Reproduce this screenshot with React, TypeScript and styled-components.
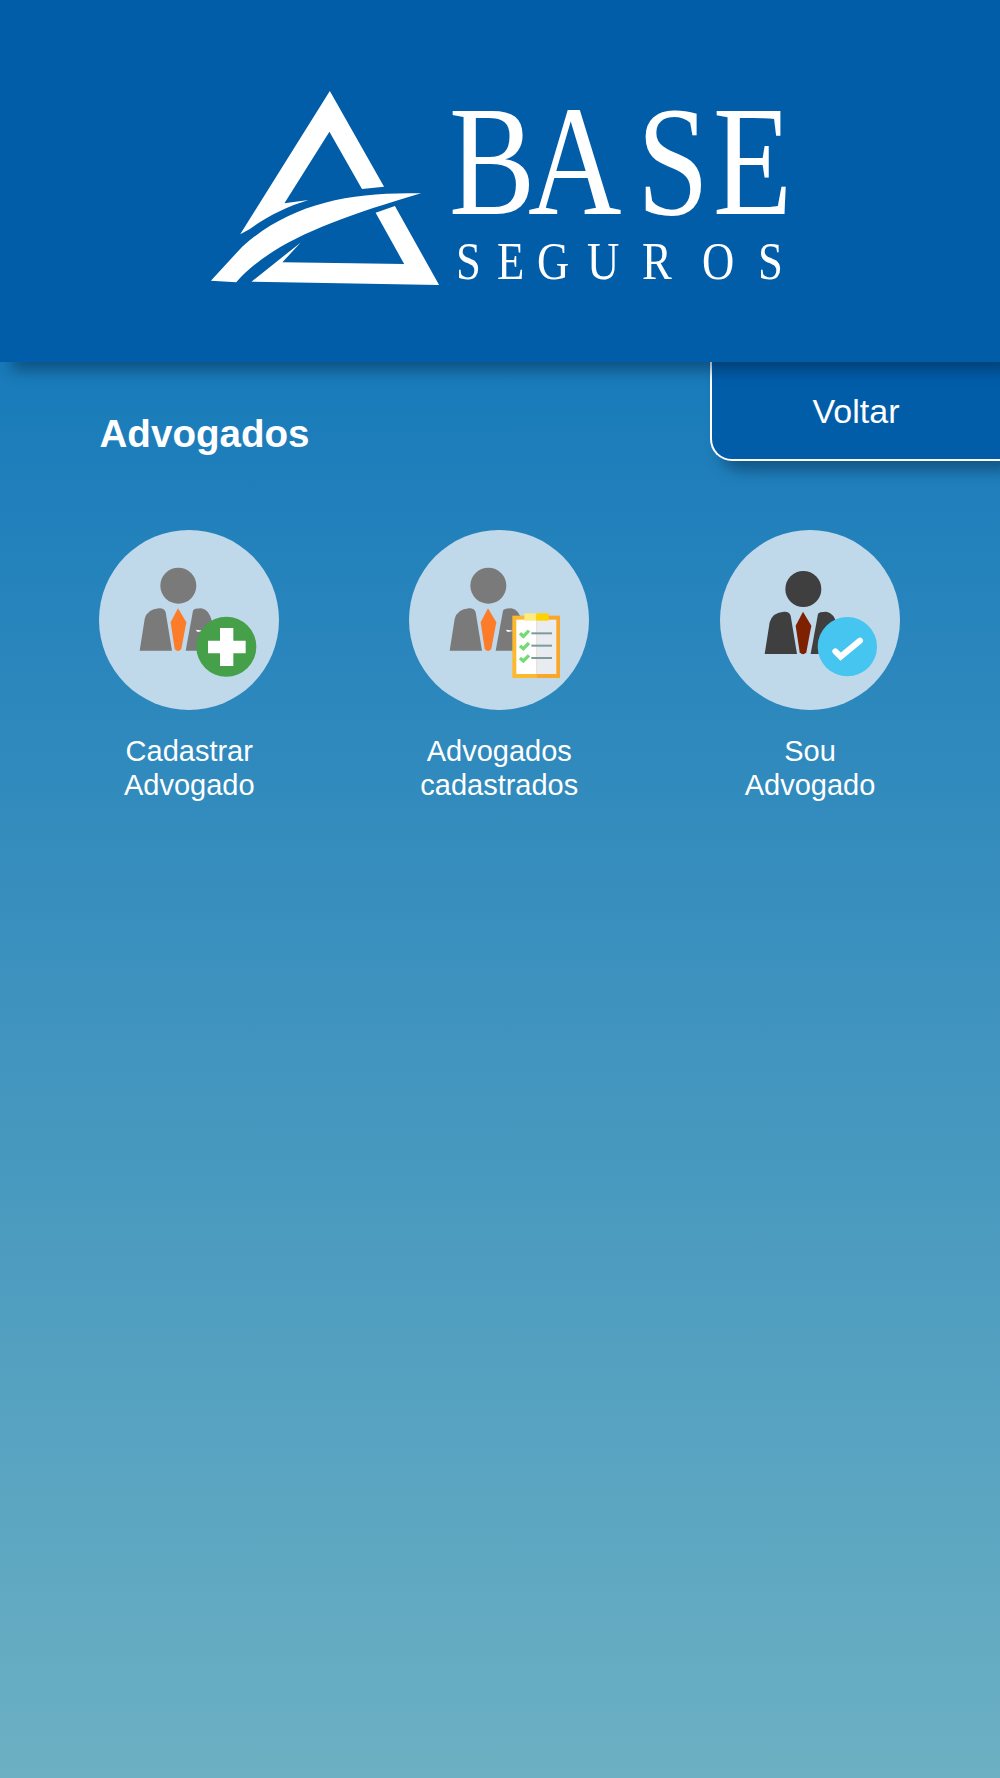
import React from "react";
import styled, { createGlobalStyle } from "styled-components";

const Global = createGlobalStyle`
  html, body { margin: 0; padding: 0; }
  body { font-family: "Liberation Sans", Arial, sans-serif; }
`;

const Page = styled.div`
  width: 1000px;
  min-height: 1778px;
  background: linear-gradient(180deg, #036db8 0%, #6cb0c3 100%);
  color: #fff;
  overflow: hidden;
`;

const Header = styled.header`
  position: relative;
  z-index: 2;
  height: 362px;
  box-sizing: border-box;
  padding: 70px 0 0 190px;
  background: #025da9;
  box-shadow: 12px 8px 14px rgba(0, 30, 60, 0.45);
`;

const LogoSvg = styled.svg`
  display: block;
  width: 630px;
  height: 230px;
`;

const LogoText = styled.text`
  font-family: "Liberation Serif", "Times New Roman", serif;
  fill: #fff;
`;

const TopRow = styled.div`
  display: flex;
  justify-content: space-between;
  align-items: flex-start;
`;

const Title = styled.h1`
  margin: 50px 0 0 99.5px;
  font-size: 38.6px;
  font-weight: 700;
  line-height: 44px;
`;

const BackButton = styled.button`
  width: 290px;
  height: 99px;
  box-sizing: border-box;
  padding: 2px 0 0;
  border: 2px solid #fff;
  border-top: 0;
  border-right: 0;
  border-bottom-left-radius: 22px;
  background: #025da9;
  color: #fff;
  font-family: inherit;
  font-size: 34px;
  box-shadow: 10px 10px 14px rgba(0, 30, 60, 0.4);
`;

const Grid = styled.nav`
  display: grid;
  grid-template-columns: 309.5px 310.5px 311px;
  padding-left: 34.5px;
  margin-top: 68.5px;
`;

const Tile = styled.a`
  display: flex;
  flex-direction: column;
  align-items: center;
  font-size: 29px;
  line-height: 34px;
  text-align: center;
  color: #fff;
`;

const IconCircle = styled.div`
  width: 180px;
  height: 180px;
  margin-bottom: 24px;
  border-radius: 50%;
  background: #bfd9ea;
`;

const IconSvg = styled.svg`
  display: block;
  width: 180px;
  height: 180px;
`;

type PersonProps = { body: string; tie: string; dx?: number; dy?: number };

const Person = ({ body, tie, dx = 0, dy = 0 }: PersonProps) => (
  <g transform={`translate(${dx} ${dy})`}>
    <circle cx="238" cy="167" r="54" fill={body} />
    <path
      d="M122 362 L137 267 Q145 237 180 235 Q196 234 200 247 L219 362 Z"
      fill={body}
    />
    <path
      d="M260 362 L282 242 Q285 235 307 235 Q330 237 340 277 L352 362 Z"
      fill={body}
    />
    <path
      d="M237 235 L262 277 L247 357 Q237 369 227 357 L215 277 Z"
      fill={tie}
    />
    <path d="M290 299 L314 302 L296 306 Z" fill="#fff" />
  </g>
);

const Clipboard = () => (
  <g>
    <rect x="310" y="257" width="72" height="187" fill="#fdb92e" />
    <rect x="382" y="257" width="71" height="187" fill="#f9a72b" />
    <rect x="322" y="269" width="60" height="163" fill="#fff" />
    <rect x="382" y="269" width="60" height="163" fill="#e8ecf0" />
    <rect x="346" y="250" width="36" height="22" fill="#fdea80" />
    <rect x="382" y="250" width="37" height="22" fill="#ffd200" />
    {[310, 347, 384].map((y) => (
      <g key={y}>
        <path
          d="M333 0 L343 9 L360 -8"
          transform={`translate(0 ${y})`}
          fill="none"
          stroke="#72dc72"
          strokeWidth="10"
        />
        <rect x="367" y={y - 3} width="62" height="6" fill="#7f9a9e" />
      </g>
    ))}
  </g>
);

const PlusBadge = () => (
  <g>
    <circle cx="382" cy="350" r="90" fill="#45a049" />
    <path
      d="M363 294 H403 V332 H440 V370 H403 V408 H363 V370 H327 V332 H363 Z"
      fill="#fff"
    />
  </g>
);

const CheckBadge = () => (
  <g>
    <circle cx="382" cy="350" r="89" fill="#45c5ef" />
    <path
      d="M346 364 L362 380 L420 332"
      fill="none"
      stroke="#fff"
      strokeWidth="18"
      strokeLinecap="round"
    />
  </g>
);

const Tiles = [
  {
    lines: ["Cadastrar", "Advogado"],
    icon: (
      <>
        <Person body="#7a7a7a" tie="#fd7c2a" />
        <PlusBadge />
      </>
    ),
  },
  {
    lines: ["Advogados", "cadastrados"],
    icon: (
      <>
        <Person body="#7a7a7a" tie="#fd7c2a" />
        <Clipboard />
      </>
    ),
  },
  {
    lines: ["Sou", "Advogado"],
    icon: (
      <>
        <Person body="#3f3f3f" tie="#7e2100" dx={12} dy={10} />
        <CheckBadge />
      </>
    ),
  },
];

const seguros = [266, 307, 347, 397, 452, 512, 568];
const base = [259, 338, 447, 523];
const BASE_SCALE = 0.83;
const SEGUROS_SCALE = 0.86;

export default function App() {
  return (
    <Page>
      <Global />
      <Header>
        <LogoSvg viewBox="0 0 630 230" role="img" aria-label="Base Seguros">
          <g transform="scale(0.4018 0.3333)" fill="#fff">
            <path d="M348 63 L483 350 L428 357 L347 185 L235 400 L295 390 C240 410 190 440 148 478 L125 493 Z" />
            <path d="M575 370 C400 365 250 400 130 530 L52 632 L115 637 C200 520 350 450 575 370 Z" />
            <path d="M510 408 L620 645 L153 635 L275 518 L230 577 L533 582 L462 428 Z" />
          </g>
          <LogoText
            transform={`scale(${BASE_SCALE} 1)`}
            fontSize="156"
            y="144"
            x={base.map((x) => (x / BASE_SCALE).toFixed(1)).join(" ")}
          >
            BASE
          </LogoText>
          <LogoText
            transform={`scale(${SEGUROS_SCALE} 1)`}
            fontSize="52"
            y="209"
            x={seguros.map((x) => (x / SEGUROS_SCALE).toFixed(1)).join(" ")}
          >
            SEGUROS
          </LogoText>
        </LogoSvg>
      </Header>
      <TopRow>
        <Title>Advogados</Title>
        <BackButton>Voltar</BackButton>
      </TopRow>
      <Grid>
        {Tiles.map((t) => (
          <Tile key={t.lines.join(" ")}>
            <IconCircle>
              <IconSvg viewBox="0 0 540 540">{t.icon}</IconSvg>
            </IconCircle>
            <span>
              {t.lines[0]}
              <br />
              {t.lines[1]}
            </span>
          </Tile>
        ))}
      </Grid>
    </Page>
  );
}
